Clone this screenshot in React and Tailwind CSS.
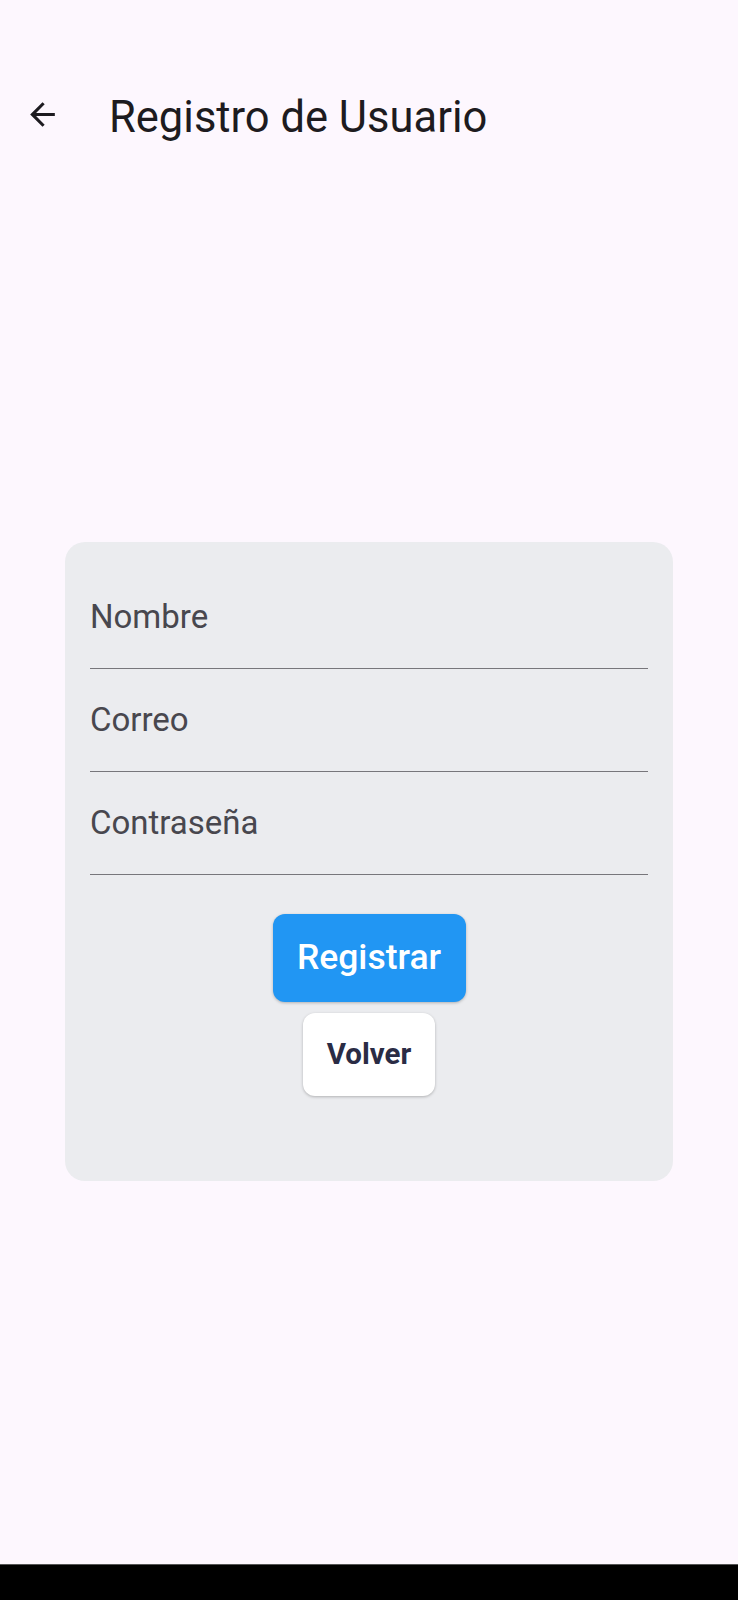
import { useState } from "react";

const FONT = { fontFamily: "Roboto, 'Noto Sans', sans-serif" };

function BackArrow() {
  return (
    <svg viewBox="0 0 24 24" className="w-[37px] h-[37px]" fill="#1d1b20">
      <path d="M20 11H7.83l5.59-5.59L12 4l-8 8 8 8 1.41-1.41L7.83 13H20v-2z" />
    </svg>
  );
}

function Field({ label, type = "text", value, onChange }) {
  return (
    <div className="h-[103px] flex flex-col border-b-[1.5px] border-[#77767b]">
      <input
        type={type}
        value={value}
        onChange={(e) => onChange(e.target.value)}
        placeholder={label}
        className="mt-[33px] h-[36px] bg-transparent outline-none text-[33px] leading-[36px] text-[#44464f] placeholder:text-[#48474e]"
      />
    </div>
  );
}

export default function App() {
  const [nombre, setNombre] = useState("");
  const [correo, setCorreo] = useState("");
  const [password, setPassword] = useState("");

  return (
    <div className="min-h-[1600px] w-full bg-[#fdf7fe] flex flex-col" style={FONT}>
      {/* App bar */}
      <div className="h-[234px] flex items-start pt-[96px] pl-[24px]">
        <button className="w-[37px] h-[37px] flex items-center justify-center">
          <BackArrow />
        </button>
        <h1 className="ml-[48px] text-[43.5px] leading-[44px] text-[#1d1b20]">
          Registro de Usuario
        </h1>
      </div>

      {/* Card */}
      <div className="flex justify-center pt-[308px]">
        <div className="w-[608px] h-[639px] bg-[#ebecef] rounded-[20px] px-[25px] pt-[24px] flex flex-col">
          <Field label="Nombre" value={nombre} onChange={setNombre} />
          <Field label="Correo" value={correo} onChange={setCorreo} />
          <Field
            label="Contraseña"
            type="password"
            value={password}
            onChange={setPassword}
          />

          <div className="flex flex-col items-center mt-[39px] gap-[11px]">
            <button className="w-[193px] h-[88px] rounded-[12px] bg-[#2196f3] text-white text-[35.5px] font-medium shadow-[0_1px_3px_rgba(0,0,0,0.25)]">
              Registrar
            </button>
            <button className="w-[132px] h-[83px] rounded-[12px] bg-white text-[#2a2c45] text-[29.5px] font-bold shadow-[0_1px_3px_rgba(0,0,0,0.25)]">
              Volver
            </button>
          </div>
        </div>
      </div>

      <div className="flex-1" />
      <div className="h-[36px] bg-black border-t border-[#555]" />
    </div>
  );
}
